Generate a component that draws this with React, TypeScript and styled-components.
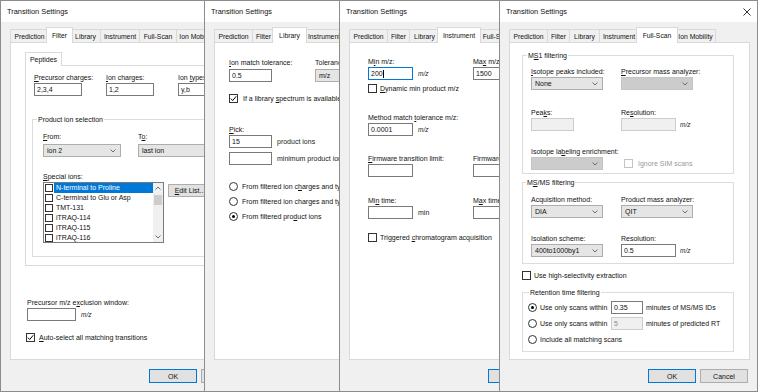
import React from "react";
import styled, { createGlobalStyle, css } from "styled-components";

const GlobalStyle = createGlobalStyle`
  html, body { margin: 0; padding: 0; background: #fff; }
  body { font-family: "Liberation Sans", Arial, sans-serif; font-size: 7px; color: #111; }
  * { box-sizing: border-box; }
  u { text-underline-offset: 1px; }
`;

const Desktop = styled.div`
  display: flex;
  width: 758px;
  height: 392px;
  overflow: hidden;
`;

const Clip = styled.div<{ $w: number }>`
  flex: none;
  width: ${(p) => p.$w}px;
  height: 392px;
  overflow: hidden;
`;

const Win = styled.div`
  width: 259px;
  height: 392px;
  border: 1px solid #8c8c8c;
  background: #f0f0f0;
  display: flex;
  flex-direction: column;
`;

const TitleBar = styled.div`
  flex: none;
  height: 21px;
  background: #fff;
  display: flex;
  align-items: center;
  justify-content: space-between;
  padding: 0 6px;
  font-size: 7.4px;
`;

const TabRow = styled.div`
  display: flex;
  align-items: flex-end;
  height: 15px;
  margin: 5px 0 0 9px;
  position: relative;
  z-index: 1;
`;

const Tab = styled.div<{ $w: number; $on?: boolean }>`
  flex: none;
  width: ${(p) => p.$w}px;
  height: 13px;
  margin-right: -1px;
  border: 1px solid #d9d9d9;
  border-bottom: none;
  background: #f0f0f0;
  display: flex;
  align-items: center;
  justify-content: center;
  white-space: nowrap;
  overflow: hidden;
  font-size: 6.8px;
  ${(p) =>
    p.$on &&
    css`
      width: ${p.$w + 4}px;
      height: 16px;
      margin: 0 -3px -1px -2px;
      background: #fff;
      position: relative;
      z-index: 1;
      padding-bottom: 1px;
    `}
`;

const Panel = styled.div`
  margin-left: 9px;
  width: 241px;
  height: 318px;
  flex: none;
  background: #fff;
  border: 1px solid #d9d9d9;
  display: flex;
  flex-direction: column;
  align-items: flex-start;
`;

const Footer = styled.div`
  display: flex;
  justify-content: flex-end;
  gap: 4px;
  padding-right: 9px;
  margin-top: 9px;
`;

const Btn = styled.div<{ $def?: boolean; $w?: number; $mt?: number }>`
  flex: none;
  width: ${(p) => p.$w ?? 48}px;
  height: ${(p) => (p.$w ? 13 : 14)}px;
  margin-top: ${(p) => p.$mt ?? 0}px;
  background: #e1e1e1;
  border: 1px solid ${(p) => (p.$def ? "#0078d7" : "#adadad")};
  display: flex;
  align-items: center;
  justify-content: center;
  white-space: nowrap;
`;

const Row = styled.div<{ $gap?: number; $mt?: number; $ml?: number; $align?: string }>`
  display: flex;
  align-items: ${(p) => p.$align ?? "center"};
  gap: ${(p) => p.$gap ?? 0}px;
  margin-top: ${(p) => p.$mt ?? 0}px;
  margin-left: ${(p) => p.$ml ?? 0}px;
  flex: none;
`;

const Field = styled.div<{ $gap?: number; $mt?: number; $ml?: number; $w?: number }>`
  display: flex;
  flex-direction: column;
  align-items: flex-start;
  gap: ${(p) => p.$gap ?? 1}px;
  margin-top: ${(p) => p.$mt ?? 0}px;
  margin-left: ${(p) => p.$ml ?? 0}px;
  width: ${(p) => (p.$w ? `${p.$w}px` : "auto")};
  flex: none;
`;

const Label = styled.span<{ $dim?: boolean; $w?: number }>`
  display: block;
  height: 9px;
  line-height: 9px;
  white-space: nowrap;
  color: ${(p) => (p.$dim ? "#9a9a9a" : "#111")};
  ${(p) => p.$w && `width: ${p.$w}px; flex: none;`}
`;

const Unit = styled.span<{ $it?: boolean }>`
  white-space: nowrap;
  font-size: ${(p) => (p.$it ? 6.5 : 7)}px;
  font-style: ${(p) => (p.$it ? "italic" : "normal")};
  color: #222;
`;

const TextBox = styled.div<{ $w: number; $state?: "focus" | "off" }>`
  flex: none;
  width: ${(p) => p.$w}px;
  height: 13px;
  padding-left: 2px;
  display: flex;
  align-items: center;
  white-space: nowrap;
  background: ${(p) => (p.$state === "off" ? "#f0f0f0" : "#fff")};
  border: 1px solid
    ${(p) => (p.$state === "focus" ? "#0078d7" : p.$state === "off" ? "#cccccc" : "#7a7a7a")};
  color: ${(p) => (p.$state === "off" ? "#8a8a8a" : "#111")};
`;

const Caret = styled.span`
  width: 1px;
  height: 8px;
  background: #000;
`;

const Combo = styled.div<{ $w: number; $off?: boolean }>`
  flex: none;
  width: ${(p) => p.$w}px;
  height: 13px;
  padding: 0 4px 0 3px;
  display: flex;
  align-items: center;
  justify-content: space-between;
  white-space: nowrap;
  background: ${(p) => (p.$off ? "#cccccc" : "#e5e5e5")};
  border: 1px solid ${(p) => (p.$off ? "#c4c4c4" : "#adadad")};
`;

const Box = styled.span<{ $off?: boolean; $size?: number }>`
  flex: none;
  width: ${(p) => p.$size ?? 9}px;
  height: ${(p) => p.$size ?? 9}px;
  background: #fff;
  border: 1px solid ${(p) => (p.$off ? "#c4c4c4" : "#333")};
  display: flex;
  align-items: center;
  justify-content: center;
`;

const RadioDot = styled.span<{ $on?: boolean }>`
  flex: none;
  width: 9px;
  height: 9px;
  border-radius: 50%;
  background: #fff;
  border: 1px solid #333;
  display: flex;
  align-items: center;
  justify-content: center;
  &::after {
    content: "";
    width: 3px;
    height: 3px;
    border-radius: 50%;
    background: ${(p) => (p.$on ? "#000" : "transparent")};
  }
`;

const CheckRow = styled.div<{ $mt?: number; $ml?: number; $gap?: number; $h?: number }>`
  display: flex;
  align-items: center;
  height: ${(p) => p.$h ?? 10}px;
  gap: ${(p) => p.$gap ?? 3}px;
  margin-top: ${(p) => p.$mt ?? 0}px;
  margin-left: ${(p) => p.$ml ?? 0}px;
  white-space: nowrap;
  flex: none;
`;

const Group = styled.fieldset<{ $w: number; $mt: number; $ml: number; $pt: number; $pb: number; $pl: number }>`
  margin: ${(p) => p.$mt}px 0 0 ${(p) => p.$ml}px;
  width: ${(p) => p.$w}px;
  min-width: 0;
  flex: none;
  border: 1px solid #dcdcdc;
  padding: ${(p) => p.$pt}px 0 ${(p) => p.$pb}px ${(p) => p.$pl}px;
  display: flex;
  flex-direction: column;
  align-items: flex-start;
`;

const Legend = styled.legend<{ $shift: number }>`
  padding: 0 1px;
  margin-left: ${(p) => p.$shift}px;
  height: 9px;
  line-height: 9px;
  font-size: 7px;
  white-space: nowrap;
`;

const SubTab = styled.div`
  flex: none;
  margin: 9px 0 -1px 14px;
  width: 37px;
  height: 14px;
  background: #fff;
  border: 1px solid #d9d9d9;
  border-bottom: none;
  position: relative;
  z-index: 1;
  display: flex;
  align-items: center;
  justify-content: center;
`;

const InnerPanel = styled.div`
  flex: none;
  margin-left: 14px;
  width: 240px;
  height: 201px;
  border: 1px solid #d9d9d9;
  padding: 7px 0 0 6px;
  display: flex;
  flex-direction: column;
  align-items: flex-start;
`;

const ListBox = styled.div`
  flex: none;
  width: 121px;
  height: 61px;
  border: 1px solid #7a7a7a;
  background: #fff;
  display: flex;
`;

const ListItems = styled.div`
  flex: 1;
  padding-left: 1px;
  display: flex;
  flex-direction: column;
`;

const ListItem = styled.div`
  height: 10px;
  display: flex;
  align-items: center;
  gap: 1px;
`;

const ItemText = styled.span<{ $sel?: boolean }>`
  flex: 1;
  height: 10px;
  line-height: 10px;
  padding-left: 2px;
  white-space: nowrap;
  background: ${(p) => (p.$sel ? "#0078d7" : "transparent")};
  color: ${(p) => (p.$sel ? "#fff" : "#111")};
`;

const ScrollBar = styled.div`
  flex: none;
  width: 10px;
  background: #f0f0f0;
  display: flex;
  flex-direction: column;
  align-items: center;
`;

const ScrollArrow = styled.div`
  height: 10px;
  display: flex;
  align-items: center;
  justify-content: center;
`;

const Thumb = styled.div`
  width: 8px;
  height: 10px;
  margin-top: 2px;
  background: #cdcdcd;
`;

const Spacer = styled.div`
  flex: 1;
`;

const Chevron = ({ up }: { up?: boolean }) => (
  <svg width="6" height="4" viewBox="0 0 6 4">
    <path d={up ? "M0.5 3.5L3 1L5.5 3.5" : "M0.5 0.5L3 3L5.5 0.5"} stroke="#606060" fill="none" strokeWidth="0.9" />
  </svg>
);

const Tick = () => (
  <svg width="7" height="7" viewBox="0 0 7 7">
    <path d="M0.8 3.6L2.7 5.5L6.2 1.3" stroke="#000" fill="none" strokeWidth="1" />
  </svg>
);

const Close = () => (
  <svg width="8" height="8" viewBox="0 0 8 8">
    <path d="M0.5 0.5L7.5 7.5M7.5 0.5L0.5 7.5" stroke="#000" strokeWidth="0.8" />
  </svg>
);

const Check = ({ on, off }: { on?: boolean; off?: boolean }) => <Box $off={off}>{on && <Tick />}</Box>;

const Select = ({ w, children, off }: { w: number; children?: React.ReactNode; off?: boolean }) => (
  <Combo $w={w} $off={off}>
    <span>{children}</span>
    <Chevron />
  </Combo>
);

const tabNames = ["Prediction", "Filter", "Library", "Instrument", "Full-Scan", "Ion Mobility"];
const tabWidths = [39, 23, 31, 40, 38, 41];

function Dialog({ active, close, children }: { active: string; close?: boolean; children: React.ReactNode }) {
  return (
    <Win>
      <TitleBar>
        <span>Transition Settings</span>
        {close && <Close />}
      </TitleBar>
      <TabRow>
        {tabNames.map((t, i) => (
          <Tab key={t} $w={tabWidths[i]} $on={t === active}>
            {t}
          </Tab>
        ))}
      </TabRow>
      <Panel>{children}</Panel>
      <Footer>
        <Btn $def>OK</Btn>
        <Btn>Cancel</Btn>
      </Footer>
    </Win>
  );
}

const specialIons = ["N-terminal to Proline", "C-terminal to Glu or Asp", "TMT-131", "iTRAQ-114", "iTRAQ-115", "iTRAQ-116"];

function FilterTab() {
  return (
    <>
      <SubTab>Peptides</SubTab>
      <InnerPanel>
        <Row $gap={24} $ml={2} $align="flex-start">
          <Field $w={48}>
            <Label><u>P</u>recursor charges:</Label>
            <TextBox $w={48}>2,3,4</TextBox>
          </Field>
          <Field $w={48}>
            <Label><u>I</u>on charges:</Label>
            <TextBox $w={48}>1,2</TextBox>
          </Field>
          <Field $w={48}>
            <Label>Ion <u>t</u>ypes:</Label>
            <TextBox $w={48}>y,b</TextBox>
          </Field>
        </Row>
        <Group $w={200} $mt={19} $ml={0} $pt={8} $pb={13} $pl={10}>
          <Legend $shift={-6}>Product ion selection</Legend>
          <Row $gap={17} $align="flex-start">
            <Field $gap={3}>
              <Label><u>F</u>rom:</Label>
              <Select w={78}>ion 2</Select>
            </Field>
            <Field $gap={3}>
              <Label>T<u>o</u>:</Label>
              <Select w={78}>last ion</Select>
            </Field>
          </Row>
          <Field $mt={15}>
            <Label><u>S</u>pecial ions:</Label>
            <Row $gap={4} $align="flex-start">
              <ListBox>
                <ListItems>
                  {specialIons.map((s, i) => (
                    <ListItem key={s}>
                      <Box $size={8} />
                      <ItemText $sel={i === 0}>{s}</ItemText>
                    </ListItem>
                  ))}
                </ListItems>
                <ScrollBar>
                  <ScrollArrow>
                    <Chevron up />
                  </ScrollArrow>
                  <Thumb />
                  <Spacer />
                  <ScrollArrow>
                    <Chevron />
                  </ScrollArrow>
                </ScrollBar>
              </ListBox>
              <Btn $w={44} $mt={2}>
                <span><u>E</u>dit List...</span>
              </Btn>
            </Row>
          </Field>
        </Group>
      </InnerPanel>
      <Field $mt={32} $ml={16}>
        <Label>Precursor m/z e<u>x</u>clusion window:</Label>
        <Row $gap={5}>
          <TextBox $w={49} />
          <Unit $it>m/z</Unit>
        </Row>
      </Field>
      <CheckRow $mt={11} $ml={15} $gap={4}>
        <Check on />
        <span><u>A</u>uto-select all matching transitions</span>
      </CheckRow>
    </>
  );
}

function LibraryTab() {
  return (
    <>
      <Row $gap={43} $mt={15} $ml={14} $align="flex-start">
        <Field $gap={2} $w={43}>
          <Label><u>I</u>on match tolerance:</Label>
          <TextBox $w={43}>0.5</TextBox>
        </Field>
        <Field $gap={2}>
          <Label>Tolerance units:</Label>
          <Select w={70}>m/z</Select>
        </Field>
      </Row>
      <CheckRow $mt={11} $ml={14} $gap={5}>
        <Check on />
        <span>If a library <u>s</u>pectrum is available, pick its most intense ions</span>
      </CheckRow>
      <Field $mt={22} $ml={14}>
        <Label><u>P</u>ick:</Label>
        <Row $gap={5}>
          <TextBox $w={43}>15</TextBox>
          <Unit>product ions</Unit>
        </Row>
      </Field>
      <Row $gap={5} $mt={4} $ml={14}>
        <TextBox $w={43} />
        <Unit>minimum product ions</Unit>
      </Row>
      <CheckRow $mt={16} $ml={14} $gap={4}>
        <RadioDot />
        <span>From filtered ion c<u>h</u>arges and types plus filtered product ions</span>
      </CheckRow>
      <CheckRow $mt={5} $ml={14} $gap={4}>
        <RadioDot />
        <span>From filtered ion charges and types</span>
      </CheckRow>
      <CheckRow $mt={5} $ml={14} $gap={4}>
        <RadioDot $on />
        <span>From filtered pro<u>d</u>uct ions</span>
      </CheckRow>
    </>
  );
}

function InstrumentTab() {
  return (
    <>
      <Row $mt={14} $ml={18} $align="flex-start">
        <Field $w={105}>
          <Label>M<u>i</u>n m/z:</Label>
          <Row $gap={5}>
            <TextBox $w={45} $state="focus">
              200
              <Caret />
            </TextBox>
            <Unit $it>m/z</Unit>
          </Row>
        </Field>
        <Field>
          <Label>Ma<u>x</u> m/z:</Label>
          <TextBox $w={45}>1500</TextBox>
        </Field>
      </Row>
      <CheckRow $mt={3} $ml={18}>
        <Check />
        <span><u>D</u>ynamic min product m/z</span>
      </CheckRow>
      <Field $mt={20} $ml={18}>
        <Label>Method match <u>t</u>olerance m/z:</Label>
        <Row $gap={5}>
          <TextBox $w={45}>0.0001</TextBox>
          <Unit $it>m/z</Unit>
        </Row>
      </Field>
      <Row $mt={18} $ml={18} $align="flex-start">
        <Field $w={105}>
          <Label><u>F</u>irmware transition limit:</Label>
          <TextBox $w={45} />
        </Field>
        <Field>
          <Label>Firmware inclusion limit:</Label>
          <TextBox $w={45} />
        </Field>
      </Row>
      <Row $mt={19} $ml={18} $align="flex-start">
        <Field $w={105}>
          <Label>Mi<u>n</u> time:</Label>
          <Row $gap={5}>
            <TextBox $w={45} />
            <Unit>min</Unit>
          </Row>
        </Field>
        <Field>
          <Label>M<u>a</u>x time:</Label>
          <TextBox $w={45} />
        </Field>
      </Row>
      <CheckRow $mt={13} $ml={18}>
        <Check />
        <span>Triggered <u>c</u>hromatogram acquisition</span>
      </CheckRow>
    </>
  );
}

function FullScanTab() {
  return (
    <>
      <Group $w={212} $mt={8} $ml={12} $pt={7} $pb={3} $pl={8}>
        <Legend $shift={-4}>M<u>S</u>1 filtering</Legend>
        <Row $gap={18} $align="flex-start">
          <Field $w={72}>
            <Label><u>I</u>sotope peaks included:</Label>
            <Select w={72}>None</Select>
          </Field>
          <Field>
            <Label><u>P</u>recursor mass analyzer:</Label>
            <Select w={72} off />
          </Field>
        </Row>
        <Row $gap={18} $mt={18} $align="flex-start">
          <Field $w={72}>
            <Label>Pea<u>k</u>s:</Label>
            <TextBox $w={43} $state="off" />
          </Field>
          <Field>
            <Label>Re<u>s</u>olution:</Label>
            <Row $gap={4}>
              <TextBox $w={55} $state="off" />
              <Unit $it>m/z</Unit>
            </Row>
          </Field>
        </Row>
        <Row $gap={21} $mt={16} $align="flex-end">
          <Field $w={72}>
            <Label>Isotope la<u>b</u>eling enrichment:</Label>
            <Select w={72} off />
          </Field>
          <CheckRow $h={13} $gap={5}>
            <Check off />
            <Label $dim>Ignore SIM scans</Label>
          </CheckRow>
        </Row>
      </Group>
      <Group $w={212} $mt={4} $ml={12} $pt={8} $pb={6} $pl={8}>
        <Legend $shift={-5}>M<u>S</u>/MS filtering</Legend>
        <Row $gap={18} $align="flex-start">
          <Field $w={72}>
            <Label>Acquisition method:</Label>
            <Select w={72}>DIA</Select>
          </Field>
          <Field>
            <Label>Product mass analyzer:</Label>
            <Select w={72}>QIT</Select>
          </Field>
        </Row>
        <Row $gap={18} $mt={16} $align="flex-start">
          <Field $w={72}>
            <Label>Isolation scheme:</Label>
            <Select w={72}>400to1000by1</Select>
          </Field>
          <Field>
            <Label>Resolution:</Label>
            <Row $gap={4}>
              <TextBox $w={55}>0.5</TextBox>
              <Unit $it>m/z</Unit>
            </Row>
          </Field>
        </Row>
      </Group>
      <CheckRow $mt={6} $ml={12}>
        <Check />
        <span>Use high-selectivity extraction</span>
      </CheckRow>
      <Group $w={212} $mt={8} $ml={12} $pt={4} $pb={5} $pl={5}>
        <Legend $shift={1}>Retention time filtering</Legend>
        <CheckRow $h={13}>
          <RadioDot $on />
          <Label $w={68}>Use only scans within</Label>
          <TextBox $w={32}>0.35</TextBox>
          <span>minutes of MS/MS IDs</span>
        </CheckRow>
        <CheckRow $h={13} $mt={3}>
          <RadioDot />
          <Label $w={68}>Use only scans within</Label>
          <TextBox $w={32} $state="off">5</TextBox>
          <span>minutes of predicted RT</span>
        </CheckRow>
        <CheckRow $h={13} $mt={3}>
          <RadioDot />
          <span>Include all matching scans</span>
        </CheckRow>
      </Group>
    </>
  );
}

export default function App() {
  return (
    <>
      <GlobalStyle />
      <Desktop>
        <Clip $w={204}>
          <Dialog active="Filter">
            <FilterTab />
          </Dialog>
        </Clip>
        <Clip $w={135}>
          <Dialog active="Library">
            <LibraryTab />
          </Dialog>
        </Clip>
        <Clip $w={160}>
          <Dialog active="Instrument">
            <InstrumentTab />
          </Dialog>
        </Clip>
        <Clip $w={259}>
          <Dialog active="Full-Scan" close>
            <FullScanTab />
          </Dialog>
        </Clip>
      </Desktop>
    </>
  );
}
